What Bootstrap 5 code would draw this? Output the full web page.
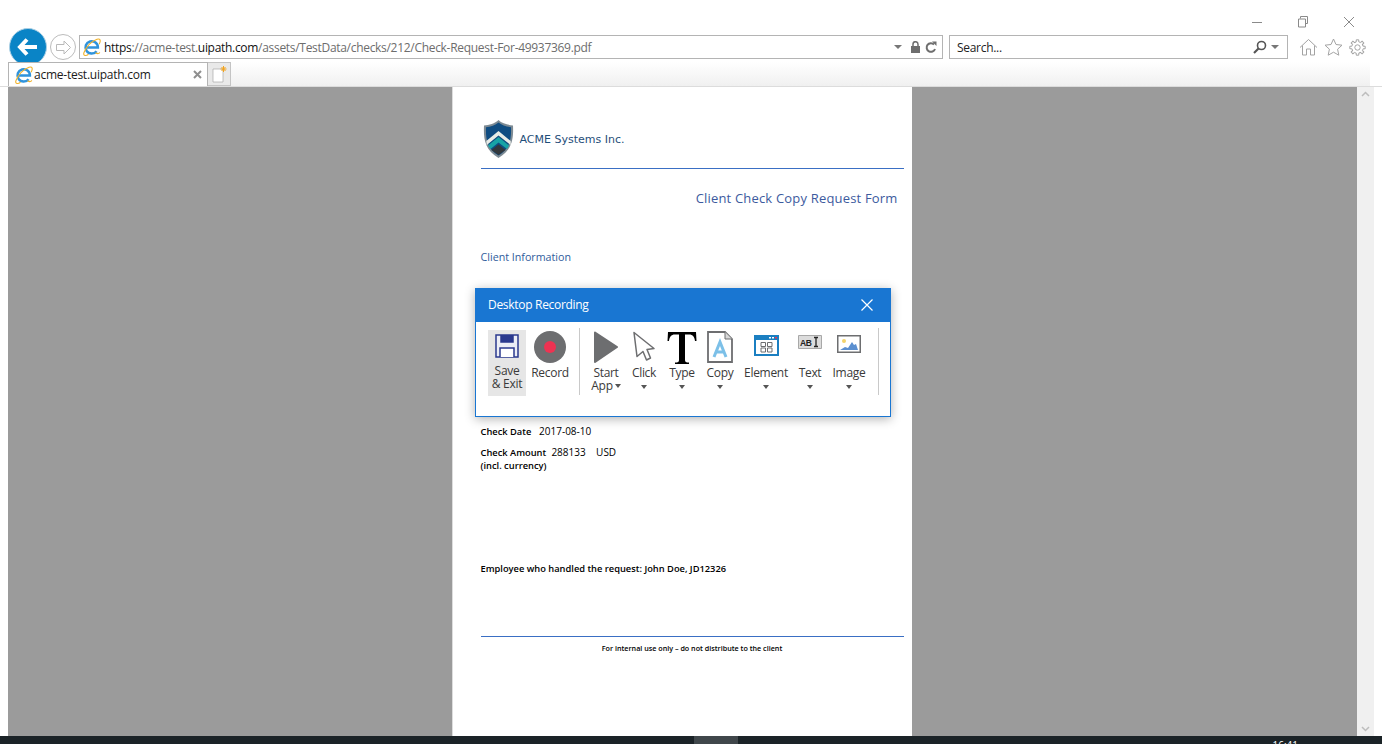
<!DOCTYPE html>
<html lang="en">
<head>
    <meta charset="UTF-8">
    <meta name="viewport" content="width=device-width, initial-scale=1.0">
    <title>Check-Request-For-49937369.pdf</title>
    <link href="https://cdn.jsdelivr.net/npm/bootstrap@5.3.0/dist/css/bootstrap.min.css" rel="stylesheet">
    <style>
        html, body { height: 100%; overflow: hidden; background: #fff; }
        body { font-family: "Open Sans", "Noto Sans", sans-serif; color: #1a1a1a; }
        #browserWin { height: 744px; position: relative; }

        /* window buttons */
        .win-controls { height: 35px; padding-top: 16px; padding-right: 27px; gap: 34px; }
        .win-controls svg { display: block; }

        /* address row */
        .addr-row { height: 24px; padding-left: 9px; }
        .nav-back { width: 38px; height: 38px; margin: -7px 0; border-radius: 50%; background: #0a84c6; border: 1px solid #a9cfe4; flex: none; }
        .nav-fwd { width: 26px; height: 26px; margin-left: 3px; border-radius: 50%; border: 1px solid #bcbcbc; flex: none; background: #fff; }
        .addr-box, .search-box { height: 24px; border: 1px solid #b4b4b4; background: #fff; font-size: 12px; letter-spacing: -.3px; }
        .addr-box { width: 864px; margin-left: 3px; padding-left: 2px; padding-right: 5px; }
        .addr-url { margin-left: 2px; padding-top: 1px; color: #6d6d6d; white-space: nowrap; }
        .addr-url b { font-weight: 400; color: #111; }
        .search-box { width: 339px; margin-left: 6px; padding-left: 7px; padding-right: 8px; color: #222; }
        .search-txt { padding-top: 1px; }
        .tiny-caret { width: 0; height: 0; border-left: 4px solid transparent; border-right: 4px solid transparent; border-top: 4px solid #777; }
        .tool-icons { margin-left: 11px; gap: 6px; }

        /* tab row */
        .tab-row { height: 24px; margin-top: 3px; padding-left: 8px; padding-right: 12px; }
        .tab-strip { height: 100%; background: linear-gradient(#fff, #f0f0f0); }
        .ie-tab { width: 200px; height: 24px; border: 1px solid #b4b4b4; border-bottom: 0; background: #fff; font-size: 12px; letter-spacing: -.25px; padding-left: 5px; padding-right: 5px; }
        .new-tab { width: 23px; height: 24px; border: 1px solid #c4c4c4; border-left: 0; background: #e9e9e9; }

        /* pdf viewer */
        .viewer { padding-left: 8px; padding-right: 8px; min-height: 0; border-top: 1px solid #dcdcdc; }
        .pdf-bg { background: #9b9b9b; padding-right: 2px; }
        .pdf-page { width: 460px; background: #fff; padding: 33px 8px 0 28px; border-left: 1px solid #ddd; color: #000; font-family: "Open Sans", sans-serif; }
        .scroll-col { width: 17px; background: #f0f0f0; }
        .logo-row { height: 38px; padding-left: 2px; gap: 6px; font: 11px "DejaVu Sans", sans-serif; color: #1f4e79; }
        .page-rule { height: 1px; background: #3a6fc4; width: 423px; }
        .rule-top { margin-top: 10px; }
        .rule-bottom { margin-top: 61px; }
        .form-title { margin-top: 20px; padding-right: 6px; font: 13px "Open Sans", sans-serif; color: #3c5a9e; letter-spacing: .18px; line-height: 18px; }
        .client-info { margin-top: 43px; font: 10.7px "Open Sans", sans-serif; color: #2f5c9c; line-height: 14px; }
        .check-date { margin-top: 161px; font-size: 10px; line-height: 12px; }
        .check-amt { margin-top: 8px; font-size: 10px; line-height: 13px; }
        .strong-lbl { font-weight: 600; font-size: 9.3px; }
        .employee { margin-top: 91px; font-size: 9.3px; font-weight: 600; line-height: 12px; }
        .foot-note { margin-top: 6px; font-size: 7.2px; font-weight: 600; line-height: 10px; text-align: center; width: 423px; }

        /* taskbar */
        .task-bar { height: 8px; background: #1b2327; flex: none; overflow: hidden; }
        .task-active { width: 44px; margin-left: 694px; background: #40474b; }
        .task-clock { color: #fff; font-size: 10px; line-height: 10px; position: absolute; right: 84px; top: 740px; }

        /* recording dialog */
        .rec-dialog { position: absolute; left: 475px; top: 288px; width: 416px; height: 129px; border: 1px solid #1976d2; box-shadow: 0 2px 10px rgba(0,0,0,.3); }
        .rec-head { height: 33px; background: #1976d2; color: #fff; font-size: 12px; letter-spacing: -.3px; padding: 0 17px 2px 12px; border: 0; }
        .rec-tools { padding: 8px 0 0 12px; font-size: 12px; letter-spacing: -.3px; color: #3a3a3a; line-height: 13px; }
        .rec-item { height: 66px; text-align: center; flex: none; }
        .rec-item .ico { height: 36px; padding-top: 1px; display: flex; align-items: flex-start; justify-content: center; }
        .save-item { width: 38px; background: #e6e6e6; }
        .save-item .ico { height: 34px; padding-top: 0; }
        .rec-caret { display: block; width: 0; height: 0; margin: 6px auto 0; border-left: 3px solid transparent; border-right: 3px solid transparent; border-top: 4px solid #555; }
        .rec-caret-in { display: inline-block; margin: 0 0 2px 2px; vertical-align: middle; }
        .rec-sep { width: 1px; height: 67px; background: #c9c9c9; margin-top: -2px; flex: none; }
        .w-record { width: 44px; margin-left: 2px; }
        .sep-one { margin-left: 7px; }
        .sep-two { margin-right: 11px; margin-left: auto; }
        .w-36 { width: 36px; }
        .w-40 { width: 40px; }
        .w-42 { width: 42px; }
        .w-52 { width: 52px; }
    </style>
</head>
<body>
<div id="browserWin" class="d-flex flex-column">
    <svg width="0" height="0" class="position-absolute">
        <defs>
            <g id="ieLogo">
                <path d="M3.800 10.600H15.900A6.200 6.200 0 1 0 14.600 14.200" fill="none" stroke="#2f93dc" stroke-width="2.500"/>
                <path d="M2 15.500C4.500 9.500 9.500 4.500 15 2.300c2-.8 3.500 0 3.200 2-.1 1-.5 2-1.100 3M13.500 15.800c2 1.200 4 1 4.200-.5M2 15.500c-.8 2 0 3.200 1.500 3 1 0 2-.5 3-1.300" fill="none" stroke="#f0b22b" stroke-width="1.100"/>
            </g>
            <path id="gearTooth" d="M10.060 4.240L10.280 1.140H13.720L13.940 4.240A8 8 0 0 1 16.120 5.140"/>
        </defs>
    </svg>

    <!-- botones de la ventana -->
    <div class="win-controls d-flex justify-content-end flex-none">
        <svg width="12" height="12" viewBox="0 0 12 12"><path d="M1 6.500h10" stroke="#8a8a8a"/></svg>
        <svg width="12" height="12" viewBox="0 0 12 12" fill="none" stroke="#8a8a8a"><path d="M3.500 2.500V.5h7v7H8.500"/><path d="M1.500 3h7v8h-7z" fill="#fff"/></svg>
        <svg width="12" height="12" viewBox="0 0 12 12"><path d="M1 1l10 10M11 1L1 11" stroke="#8a8a8a"/></svg>
    </div>

    <!-- barra de direcciones -->
    <div class="addr-row d-flex align-items-center">
        <div class="nav-back d-flex align-items-center justify-content-center">
            <svg width="22" height="20" viewBox="0 0 22 20"><path d="M10 2.500L3 10l7 7.500M3.500 10H20" fill="none" stroke="#fff" stroke-width="4"/></svg>
        </div>
        <div class="nav-fwd d-flex align-items-center justify-content-center">
            <svg width="17" height="15" viewBox="0 0 17 15"><path d="M9 1l6.500 6.500L9 14v-3.500H1.500v-6H9z" fill="#fff" stroke="#b9b9b9"/></svg>
        </div>
        <div class="addr-box d-flex align-items-center">
            <svg width="20" height="20" viewBox="0 0 20 20"><use href="#ieLogo"/></svg>
            <span class="addr-url"><b>https</b>://acme-test.<b>uipath.com</b>/assets/TestData/checks/212/Check-Request-For-49937369.pdf</span>
            <span class="tiny-caret ms-auto"></span>
            <svg class="ms-2" width="11" height="12" viewBox="0 0 11 12"><path d="M1 5h9v7H1z" fill="#6e6e6e"/><path d="M3 5V3.200a2.500 2.500 0 015 0V5" fill="none" stroke="#6e6e6e" stroke-width="1.500"/></svg>
            <svg class="ms-1" width="12" height="13" viewBox="0 0 12 13"><path d="M10 8a4.300 4.300 0 11-1-4.500" fill="none" stroke="#6e6e6e" stroke-width="2"/><path d="M7 .5h4.500V5z" fill="#6e6e6e"/></svg>
        </div>
        <div class="search-box d-flex align-items-center">
            <span class="search-txt">Search...</span>
            <svg class="ms-auto" width="14" height="14" viewBox="0 0 14 14"><circle cx="8.500" cy="5.500" r="4" fill="none" stroke="#555" stroke-width="1.600"/><path d="M5.500 8.500L1 13" stroke="#555" stroke-width="2.200"/></svg>
            <span class="tiny-caret ms-1"></span>
        </div>
        <div class="tool-icons d-flex align-items-center">
            <svg width="19" height="18" viewBox="0 0 19 18" fill="none" stroke="#a3a3a3"><path d="M1 9.500L9.500 1.500 18 9.500M3.500 7.500v9.500h4v-6h4v6h4V7.500"/></svg>
            <svg width="19" height="18" viewBox="0 0 19 18" fill="none" stroke="#a3a3a3"><path d="M9.500 1l2.500 5.500 6 .7-4.400 4 1.200 6-5.300-3-5.300 3 1.200-6-4.400-4 6-.7z"/></svg>
            <svg width="17" height="17" viewBox="0 0 24 24" fill="none" stroke="#a3a3a3" stroke-width="1.400">
                <circle cx="12" cy="12" r="3.800"/>
                <use href="#gearTooth"/>
                <use href="#gearTooth" transform="rotate(45 12 12)"/>
                <use href="#gearTooth" transform="rotate(90 12 12)"/>
                <use href="#gearTooth" transform="rotate(135 12 12)"/>
                <use href="#gearTooth" transform="rotate(180 12 12)"/>
                <use href="#gearTooth" transform="rotate(225 12 12)"/>
                <use href="#gearTooth" transform="rotate(270 12 12)"/>
                <use href="#gearTooth" transform="rotate(315 12 12)"/>
            </svg>
        </div>
    </div>

    <!-- pestañas -->
    <div class="tab-row">
        <div class="tab-strip d-flex">
            <div class="ie-tab d-flex align-items-center">
                <svg width="20" height="20" viewBox="0 0 20 20"><use href="#ieLogo"/></svg>
                <span>acme-test.uipath.com</span>
                <svg class="ms-auto" width="9" height="9" viewBox="0 0 9 9"><path d="M1 1l7 7M8 1L1 8" stroke="#8f8f8f" stroke-width="2"/></svg>
            </div>
            <div class="new-tab d-flex align-items-center justify-content-center">
                <svg width="17" height="18" viewBox="0 0 17 18"><path d="M2 4h9l1 1v12H2z" fill="#fff" stroke="#aaa" stroke-width=".7"/><path d="M12.500 1v6M9.500 4h6M10.500 2l4 4M14.500 2l-4 4" stroke="#f2a31c"/></svg>
            </div>
        </div>
    </div>

    <!-- visor del PDF -->
    <div class="viewer d-flex flex-grow-1">
        <div class="pdf-bg flex-grow-1 d-flex justify-content-center overflow-hidden">
            <div class="pdf-page">
                <div class="logo-row d-flex align-items-center">
                    <svg width="31" height="38" viewBox="0 0 31 38">
                        <path d="M15.500 0C12 3.500 6 5 1 5.500c-.5 12 0 24 14.500 32.500C30 29.500 30.500 17.500 30 5.500 25 5 19 3.500 15.500 0z" fill="#7d8a93"/>
                        <path d="M15.500 2.500C12.500 5 7.500 6.800 3 7.200c-.3 10.500.3 21 12.500 28.300C27.700 28.200 28.300 17.700 28 7.200 23.500 6.800 18.500 5 15.500 2.500z" fill="#0f4c81"/>
                        <path d="M3.300 21l12.200-10 12.200 10v4L15.500 15.500 3.800 25z" fill="#e8ece6"/>
                        <path d="M5 25.500l10.500-8.500L26 25.500l-2 3.500-8.500-6.500L7.500 29z" fill="#17a3a5"/>
                        <path d="M8.500 30l7-5.500 7 5.500-7 5z" fill="#33383c"/>
                    </svg>
                    <span>ACME Systems Inc.</span>
                </div>
                <div class="page-rule rule-top"></div>
                <div class="form-title text-end">Client Check Copy Request Form</div>
                <div class="client-info">Client Information</div>
                <div class="check-date"><span class="strong-lbl">Check Date</span> &nbsp; 2017-08-10</div>
                <div class="check-amt"><span class="strong-lbl">Check Amount</span> &nbsp;288133 &nbsp;&nbsp; USD<br><span class="strong-lbl">(incl. currency)</span></div>
                <div class="employee">Employee who handled the request: John Doe, JD12326</div>
                <div class="page-rule rule-bottom"></div>
                <div class="foot-note">For internal use only – do not distribute to the client</div>
            </div>
        </div>
        <div class="scroll-col d-flex flex-column justify-content-between align-items-center py-1">
            <svg width="9" height="6" viewBox="0 0 9 6"><path d="M1 5l3.500-3.500L8 5" fill="none" stroke="#bdbdbd" stroke-width="1.500"/></svg>
            <svg width="9" height="6" viewBox="0 0 9 6"><path d="M1 1l3.500 3.500L8 1" fill="none" stroke="#bdbdbd" stroke-width="1.500"/></svg>
        </div>
    </div>

    <!-- barra de tareas -->
    <div class="task-bar d-flex"><div class="task-active"></div></div>
    <div class="task-clock">16:41</div>

    <!-- dialogo de grabacion -->
    <div class="card rounded-0 rec-dialog bg-white">
        <div class="card-header rounded-0 rec-head d-flex align-items-center justify-content-between">
            <span>Desktop Recording</span>
            <svg width="12" height="12" viewBox="0 0 12 12"><path d="M.5.5l11 11M11.500.5l-11 11" stroke="#fff" stroke-width="1.200"/></svg>
        </div>
        <div class="rec-tools d-flex">
            <div class="rec-item save-item">
                <div class="ico"><svg class="mt-1" width="24" height="24" viewBox="0 0 24 24" fill="none" stroke="#2b3a8f" stroke-width="1.500"><path d="M1 1h22v22H1z" fill="#eceef6"/><path d="M6 1v7h12V1" fill="#2b3a8f"/><path d="M5 23v-9h14v9" fill="#fff"/></svg></div>
                <div>Save<br>&amp; Exit</div>
            </div>
            <div class="rec-item w-record">
                <div class="ico"><svg width="32" height="32" viewBox="0 0 32 32"><circle cx="16" cy="16" r="16" fill="#6d6e70"/><circle cx="16" cy="16" r="6" fill="#ee3352"/></svg></div>
                <div>Record</div>
            </div>
            <div class="rec-sep sep-one"></div>
            <div class="rec-item w-36 ms-2">
                <div class="ico"><svg width="24" height="32" viewBox="0 0 24 32"><path d="M1 1.500L23 16 1 31z" fill="#6d6e70" stroke="#6d6e70" stroke-linejoin="round" stroke-width="2"/></svg></div>
                <div>Start<br>App<span class="rec-caret rec-caret-in"></span></div>
            </div>
            <div class="rec-item w-40">
                <div class="ico"><svg width="24" height="32" viewBox="0 0 24 32"><path d="M2 1.500l20 16-7 1 3.500 8.500-4 2-3.500-8.500L5 25.500z" fill="#fff" stroke="#6d6e70" stroke-width="1.500" stroke-linejoin="round"/></svg></div>
                <div>Click<span class="rec-caret"></span></div>
            </div>
            <div class="rec-item w-36">
                <div class="ico"><svg width="30" height="34" viewBox="0 0 30 34"><path d="M1 1h28l.5 9h-1.500c-.5-4-2-6.500-6-6.500h-4V29c0 2 1 2.500 4 2.500V33H8v-1.500c3 0 4-.5 4-2.500V3.500H8c-4 0-5.500 2.500-6 6.500H.5z" fill="#000"/></svg></div>
                <div>Type<span class="rec-caret"></span></div>
            </div>
            <div class="rec-item w-40">
                <div class="ico"><svg width="26" height="32" viewBox="0 0 26 32"><path d="M1 1h17l7 7v23H1z" fill="#fff" stroke="#6d6e70" stroke-width="1.800"/><path d="M18 1v7h7" fill="#d8d8d8" stroke="#6d6e70"/><path d="M7 26l6-15 6 15M9.500 21h7" fill="none" stroke="#7cc0e8" stroke-width="3"/></svg></div>
                <div>Copy<span class="rec-caret"></span></div>
            </div>
            <div class="rec-item w-52">
                <div class="ico"><svg class="mt-1" width="25" height="21" viewBox="0 0 25 21"><path d="M0 0h25v21H0z" fill="#1b7fc1"/><path d="M2 5h21v14H2z" fill="#fff"/><path d="M7 7.500h4.500v4H7zM13.500 7.500H18v4h-4.500zM7 13h4.500v4H7zM13.500 13H18v4h-4.500z" fill="none" stroke="#6d6e70"/><path d="M15 2h2v1.500h-2zM18 2h2v1.500h-2z" fill="#fff"/><path d="M21 2h2v1.500h-2z" fill="#ee3352"/></svg></div>
                <div>Element<span class="rec-caret"></span></div>
            </div>
            <div class="rec-item w-36">
                <div class="ico"><svg class="mt-1" width="24" height="14" viewBox="0 0 24 14"><path d="M.5.5h23v13H.5z" fill="#dcdcdc" stroke="#a8a8a8"/><text x="2" y="10.500" font-family="Liberation Sans, sans-serif" font-weight="700" font-size="8.500" fill="#222">AB</text><path d="M16 2.500h4M16 11.500h4M18 2.500v9" stroke="#222" stroke-width="1.300"/></svg></div>
                <div>Text<span class="rec-caret"></span></div>
            </div>
            <div class="rec-item w-42">
                <div class="ico"><svg class="mt-1" width="24" height="18" viewBox="0 0 24 18"><path d="M.75.75h22.500v16.500H.75z" fill="#fff" stroke="#6d6e70" stroke-width="1.500"/><circle cx="7" cy="6" r="2" fill="#f3d36b"/><path d="M3 15l5-3 3 1 4-6 2 3 2-1 2 6z" fill="#5b8fd0"/></svg></div>
                <div>Image<span class="rec-caret"></span></div>
            </div>
            <div class="rec-sep sep-two"></div>
        </div>
    </div>
</div>
<script src="https://cdn.jsdelivr.net/npm/bootstrap@5.3.0/dist/js/bootstrap.bundle.min.js"></script>
</body>
</html>
